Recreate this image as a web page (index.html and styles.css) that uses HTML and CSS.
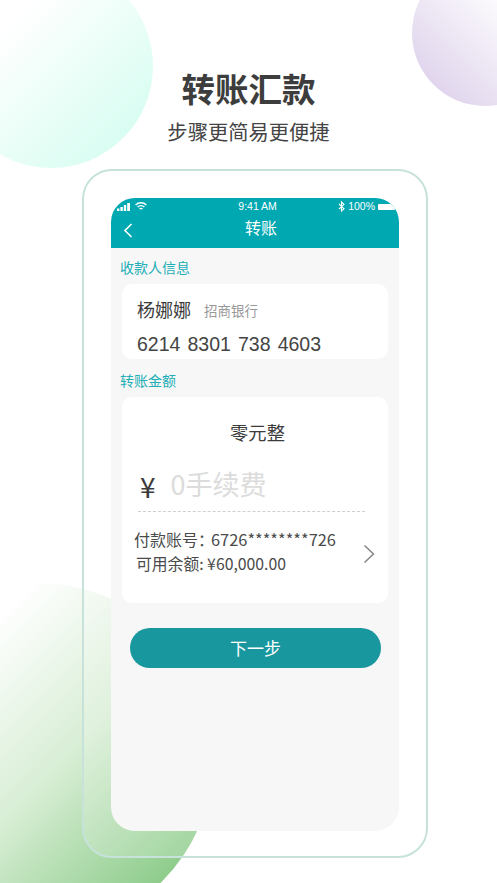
FILE: index.html
```html
<!DOCTYPE html>
<html lang="zh">
<head>
<meta charset="utf-8">
<title>转账汇款</title>
<link rel="stylesheet" href="styles.css">
</head>
<body>
<main class="page">
  <div class="blob blob-teal"></div>
  <div class="blob blob-purple"></div>
  <div class="blob blob-green"></div>
  <header class="hero">
    <h1>转账汇款</h1>
    <p>步骤更简易更便捷</p>
  </header>
  <section class="frame">
    <div class="screen">
      <div class="appbar">
        <div class="status">
          <div class="status-left">
            <svg width="15" height="8" viewBox="0 0 15 8"><rect x="0" y="5.500" width="2.400" height="2.500" fill="#fff"/><rect x="3.400" y="4" width="2.400" height="4" fill="#fff"/><rect x="6.800" y="2" width="2.400" height="6" fill="#fff"/><rect x="10.200" y="0" width="2.800" height="8" fill="#fff"/></svg>
            <svg width="12" height="9" viewBox="0 0 12 9" fill="none" stroke="#fff" stroke-width="1.400"><path d="M.6 3A7.600 7.600 0 0 1 11.400 3"/><path d="M2.600 5a4.800 4.800 0 0 1 6.800 0"/><path d="M4.500 7a2.100 2.100 0 0 1 3 0"/></svg>
          </div>
          <span class="status-time">9:41 AM</span>
          <div class="status-right">
            <svg width="7" height="11" viewBox="0 0 7 11" fill="none" stroke="#fff" stroke-width="1.100"><path d="M1 3 6 7.700 3.500 10V1L6 3.300 1 8"/></svg>
            <span>100%</span>
            <span class="battery"></span>
          </div>
        </div>
        <div class="navbar">
          <svg class="back" width="10" height="15" viewBox="0 0 10 15" fill="none" stroke="#fff" stroke-width="1.600"><path d="M8.500 1 2 7.500 8.500 14"/></svg>
          <span class="nav-title">转账</span>
        </div>
      </div>
      <div class="content">
        <h2 class="label">收款人信息</h2>
        <div class="card payee">
          <div class="payee-name"><strong>杨娜娜</strong><span>招商银行</span></div>
          <div class="payee-number">6214 8301 738 4603</div>
        </div>
        <h2 class="label label-amount">转账金额</h2>
        <div class="card amount">
          <div class="amount-words">零元整</div>
          <div class="amount-input"><span class="yen">¥</span><span class="placeholder">0手续费</span></div>
          <div class="account">
            <div class="account-text">
              <div class="account-no">付款账号：<span>6726********726</span></div>
              <div class="account-balance">可用余额: ¥60,000.00</div>
            </div>
            <svg class="chevron" width="12" height="20" viewBox="0 0 12 20" fill="none" stroke="#808080" stroke-width="1.400"><path d="M1.500 1.500 10.500 10 1.500 18.500"/></svg>
          </div>
        </div>
        <button class="next">下一步</button>
      </div>
    </div>
  </section>
</main>
</body>
</html>
```
FILE: styles.css
```css
* { box-sizing: border-box; margin: 0; padding: 0; }
html, body { background: #fff; }
body { font-family: "Noto Sans CJK SC", "Liberation Sans", sans-serif; color: #3c3c3c; }
.page { position: relative; width: 497px; height: 883px; overflow: hidden; background: #fff; }

.blob { position: absolute; border-radius: 50%; }
.blob-teal { left: -51px; top: -36px; width: 204px; height: 204px; background: linear-gradient(135deg, #fff 30%, #d9fdf2 85%); }
.blob-purple { left: 412px; top: -40px; width: 146px; height: 146px; background: linear-gradient(45deg, #dfd3ec 12%, #fff 72%); }
.blob-green { left: -137px; top: 583px; width: 350px; height: 350px; background: linear-gradient(135deg, #fff 24%, #d8eed5 54%, #8dcc8a 86%); }

.hero { position: relative; padding-top: 64px; text-align: center; }
.hero h1 { font-size: 33.500px; line-height: 48px; font-weight: 700; color: #3d3d3d; }
.hero p { margin-top: 4px; font-size: 20.300px; line-height: 30px; color: #444; }

.frame { position: relative; width: 346px; height: 689px; margin: 23px 0 0 82px; padding: 27px 27px 25px; border: 2px solid #c6e2da; border-radius: 30px; background: rgba(255,255,255,.18); }
.screen { height: 633px; border-radius: 24px; overflow: hidden; background: #f7f7f7; }

.appbar { height: 50px; background: #00a9b2; color: #fff; }
.status { display: flex; align-items: center; justify-content: space-between; height: 17px; padding: 0 4px 0 6px; font: 10.500px/17px "Liberation Sans", sans-serif; }
.status-left, .status-right { display: flex; align-items: center; gap: 3px; }
.status-time { margin-left: 30px; }
.battery { width: 17px; height: 6px; background: #fff; border-radius: 1px; }
.navbar { position: relative; display: flex; justify-content: center; align-items: center; height: 25px; font-size: 16px; line-height: 24px; }
.nav-title { margin-left: 12px; position: relative; top: -1px; }
.back { position: absolute; left: 12px; top: 8px; }

.content { padding: 9px 11px 0; }
.label { font-size: 14px; font-weight: 400; line-height: 20px; color: #22aeb6; margin-left: -2px; }
.label-amount { margin-top: 11px; }
.card { background: #fff; border-radius: 10px; margin-top: 7px; }

.payee { height: 75px; padding: 9px 15px 0; }
.payee-name { display: flex; align-items: baseline; gap: 13px; line-height: 32px; }
.payee-name strong { font-size: 18px; font-weight: 400; color: #3c3c3c; }
.payee-name span { font-size: 13.500px; color: #999; position: relative; top: -1px; }
.payee-number { font: 19.500px/26px "Liberation Sans", sans-serif; color: #444; margin-top: 4px; word-spacing: 1.700px; }

.amount { height: 206px; padding-top: 21px; }
.amount-words { text-align: center; font-size: 18.300px; line-height: 28px; color: #3c3c3c; padding-left: 5px; }
.amount-input { display: flex; align-items: center; gap: 15px; height: 50px; margin: 16px 23px 0 16px; padding: 0 0 6px 2px; border-bottom: 1px dashed #cfcfcf; }
.yen { font-size: 28px; line-height: 40px; color: #3c3c3c; position: relative; top: 2px; }
.placeholder { font-size: 27px; line-height: 40px; color: #dcdcdc; }
.account { display: flex; align-items: center; justify-content: space-between; padding: 15px 13px 0 12px; }
.account-no { font-size: 16px; line-height: 24px; color: #4a4a4a; white-space: nowrap; }
.account-no span { font-size: 16.400px; margin-left: -3px; }
.account-balance { font-size: 15.800px; line-height: 24px; color: #4a4a4a; margin: 1px 0 0 2px; white-space: nowrap; }
.chevron { margin-top: 5px; }

.next { display: block; width: 251px; height: 40px; margin: 25px 0 0 8px; border: 0; border-radius: 20px; background: #18979e; color: #fff; font: 400 17px/38px "Noto Sans CJK SC", sans-serif; }
```
